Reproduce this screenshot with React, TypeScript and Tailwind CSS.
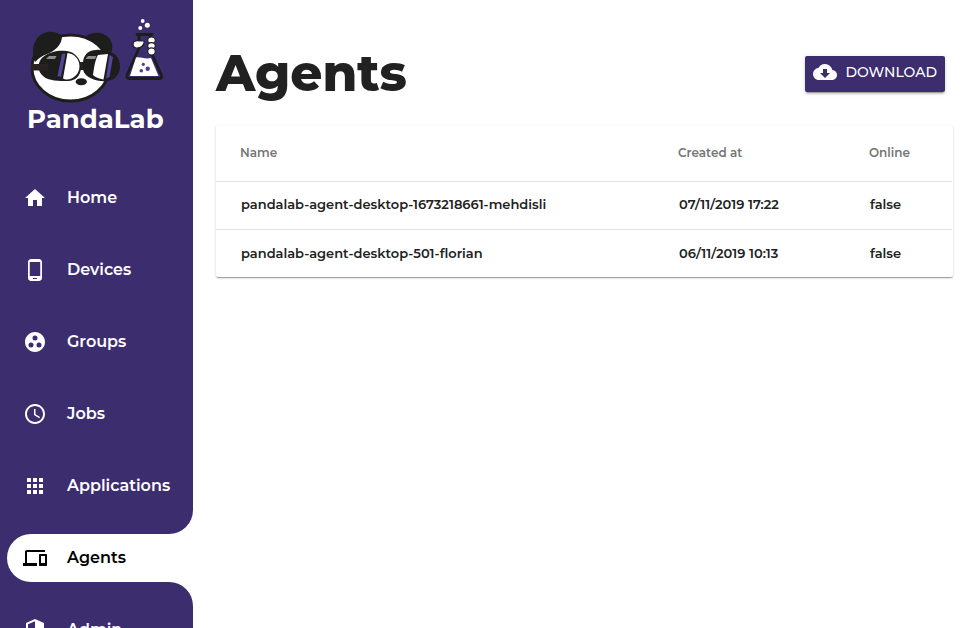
import React from "react";
import {
  MdAccessTime,
  MdApps,
  MdCloudDownload,
  MdDevices,
  MdGroupWork,
  MdHome,
  MdPhoneAndroid,
  MdSecurity,
} from "react-icons/md";
import type { IconType } from "react-icons";

type NavItem = { label: string; icon: IconType; active?: boolean };

const navItems: NavItem[] = [
  { label: "Home", icon: MdHome },
  { label: "Devices", icon: MdPhoneAndroid },
  { label: "Groups", icon: MdGroupWork },
  { label: "Jobs", icon: MdAccessTime },
  { label: "Applications", icon: MdApps },
  { label: "Agents", icon: MdDevices, active: true },
  { label: "Admin", icon: MdSecurity },
];

const agents = [
  { name: "pandalab-agent-desktop-1673218661-mehdisli", createdAt: "07/11/2019 17:22", online: false },
  { name: "pandalab-agent-desktop-501-florian", createdAt: "06/11/2019 10:13", online: false },
];

function Logo() {
  return (
    <svg viewBox="0 0 144 120" className="h-[120px] w-[144px]" role="img" aria-label="PandaLab">
      {/* head */}
      <ellipse cx="46.5" cy="52" rx="38.5" ry="33" fill="#fff" stroke="#1d1d1b" strokeWidth="2.8" />
      {/* ears */}
      <path
        d="M11 46C6 34 11 21 19 17.5C26 14 34 16 38 20C38 29 31 35 23 38C18 40 15 42 11 46Z"
        fill="#1d1d1b"
      />
      <path d="M62 20C70 15 79 16 84 21C90 27 89 34 86 38L80 36C78 30 70 24 62 20Z" fill="#1d1d1b" />
      {/* glasses */}
      <path d="M54 46H63V54H54Z" fill="#2a2220" />
      <path
        d="M19 41C26 35 36 34 43 35C51 36 57 43 57 51C57 60 51 65 44 65C36 65 24 65 19 60C13 55 13 46 19 41Z"
        fill="#1d1d1b"
      />
      <path d="M43.5 37C50 37.5 55.5 43 55.5 50.5C55.5 58 49 63.5 43 63.5C41 63.5 40 63 39 62.5Z" fill="#fff" />
      <path d="M38 38L41.5 37.5L37 60.5L33.5 60.5Z" fill="#54439a" />
      <path
        d="M59 46C60 38 65 34 72 34C77 33 80 35 82 35C90 35 96 42 96 50C96 59 90 65 82 65C76 66 66 63 62 59C59 56 58 51 59 46Z"
        fill="#1d1d1b"
      />
      <path d="M74 39L84 38L79.5 63.5C75 63 71 61 69 59C70 52 71 44 74 39Z" fill="#fff" />
      <path d="M85.5 39L89 41L85.5 61L82 62.5Z" fill="#54439a" />
      <path d="M25 40H32.5L31 43H22Z" fill="#8d8d8d" />
      <path d="M64 40H72.5L71 43H61.5Z" fill="#8d8d8d" />
      <path d="M7 48H24V54.5H7Z" fill="#2a2220" />
      <ellipse cx="57.3" cy="65.7" rx="5.7" ry="3.5" fill="#1d1d1b" />
      {/* flask */}
      <path
        d="M113 18.5H128M115 19V32L103.5 58C102.5 61 103 62.5 105 62.5H135.5C138 62.5 138 61 137 58L126 34V19"
        fill="none"
        stroke="#1d1d1b"
        strokeWidth="2.8"
        strokeLinecap="round"
        strokeLinejoin="round"
      />
      <path d="M112 41.5C116 40.5 121 43.5 127 42L134.5 60H106Z" fill="#fff" />
      <path
        d="M109 28C109 25 113 24 116 25C118 25 121 24 120 27C119 30 116 32 113 32C110 32 109 30 109 28Z"
        fill="#fff"
        stroke="#1d1d1b"
        strokeWidth="1.2"
      />
      <g fill="#fff" stroke="#1d1d1b" strokeWidth="1.2">
        <ellipse cx="127.5" cy="24.2" rx="3.8" ry="3.2" />
        <ellipse cx="127.5" cy="29.8" rx="3.8" ry="3.2" />
        <ellipse cx="127.5" cy="35.4" rx="3.8" ry="3.6" />
      </g>
      <g fill="#4f3f91">
        <circle cx="119.3" cy="48.3" r="1.6" />
        <circle cx="123.7" cy="52.7" r="2.2" />
        <circle cx="117.3" cy="54.7" r="1.8" />
      </g>
      <g fill="#fff">
        <circle cx="118.7" cy="5" r="1.9" />
        <circle cx="123.3" cy="9.3" r="2.5" />
        <circle cx="116.3" cy="12" r="2" />
      </g>
      <text x="3" y="112" fill="#fff" fontSize="26" fontWeight="700">
        PandaLab
      </text>
    </svg>
  );
}

function NavLink({ label, icon: Icon, active }: NavItem) {
  const shape = active ? "relative rounded-l-3xl bg-white text-black" : "text-white";
  return (
    <li>
      <a
        href={`#${label.toLowerCase()}`}
        aria-current={active ? "page" : undefined}
        className={`ml-[7px] flex h-12 items-center gap-5 pl-4 text-base font-semibold ${shape}`}
      >
        {active && (
          <>
            <span className="absolute right-0 bottom-full size-6 bg-white">
              <span className="block size-6 rounded-br-3xl bg-[#3c2d6f]" />
            </span>
            <span className="absolute top-full right-0 size-6 bg-white">
              <span className="block size-6 rounded-tr-3xl bg-[#3c2d6f]" />
            </span>
          </>
        )}
        <Icon className="size-6 shrink-0" aria-hidden="true" />
        {label}
      </a>
    </li>
  );
}

export default function App() {
  return (
    <div className="flex h-screen overflow-hidden bg-white font-[Montserrat,Inter,sans-serif] text-[#212121]">
      <aside className="w-[193px] shrink-0 overflow-hidden bg-[#3c2d6f]">
        <div className="pt-4 pb-[38px] pl-6">
          <Logo />
        </div>
        <nav aria-label="Main">
          <ul className="flex flex-col gap-6">
            {navItems.map((item) => (
              <NavLink key={item.label} {...item} />
            ))}
          </ul>
        </nav>
      </aside>

      <main className="min-w-0 flex-1 pt-10 pr-[21px] pl-[23px]">
        <header className="flex items-start justify-between pr-2">
          <h1 className="text-[50px] leading-[68px] font-extrabold">Agents</h1>
          <button
            type="button"
            className="mt-4 flex h-9 items-center gap-2 rounded-xs bg-[#3c2d6f] px-2 pb-1 text-sm font-medium text-white shadow-[0_3px_1px_-2px_rgba(0,0,0,0.2),0_2px_2px_rgba(0,0,0,0.14),0_1px_5px_rgba(0,0,0,0.12)]"
          >
            <MdCloudDownload className="size-6" aria-hidden="true" />
            DOWNLOAD
          </button>
        </header>

        <div className="mt-[17px] rounded-xs pr-px shadow-[0_2px_1px_-1px_rgba(0,0,0,0.2),0_1px_1px_rgba(0,0,0,0.14),0_1px_3px_rgba(0,0,0,0.16)]">
          <table className="w-full table-fixed text-left">
            <thead>
              <tr className="h-14 text-xs text-[#757575]">
                <th className="pl-6 font-semibold">Name</th>
                <th className="w-[191px] font-semibold">Created at</th>
                <th className="w-[83px] font-semibold">Online</th>
              </tr>
            </thead>
            <tbody>
              {agents.map((agent) => (
                <tr key={agent.name} className="h-12 border-t border-[#e0e0e0] text-[13px] font-semibold">
                  <td className="pl-[25px]">{agent.name}</td>
                  <td className="pl-px">{agent.createdAt}</td>
                  <td className="pl-px">{String(agent.online)}</td>
                </tr>
              ))}
            </tbody>
          </table>
        </div>
      </main>
    </div>
  );
}
